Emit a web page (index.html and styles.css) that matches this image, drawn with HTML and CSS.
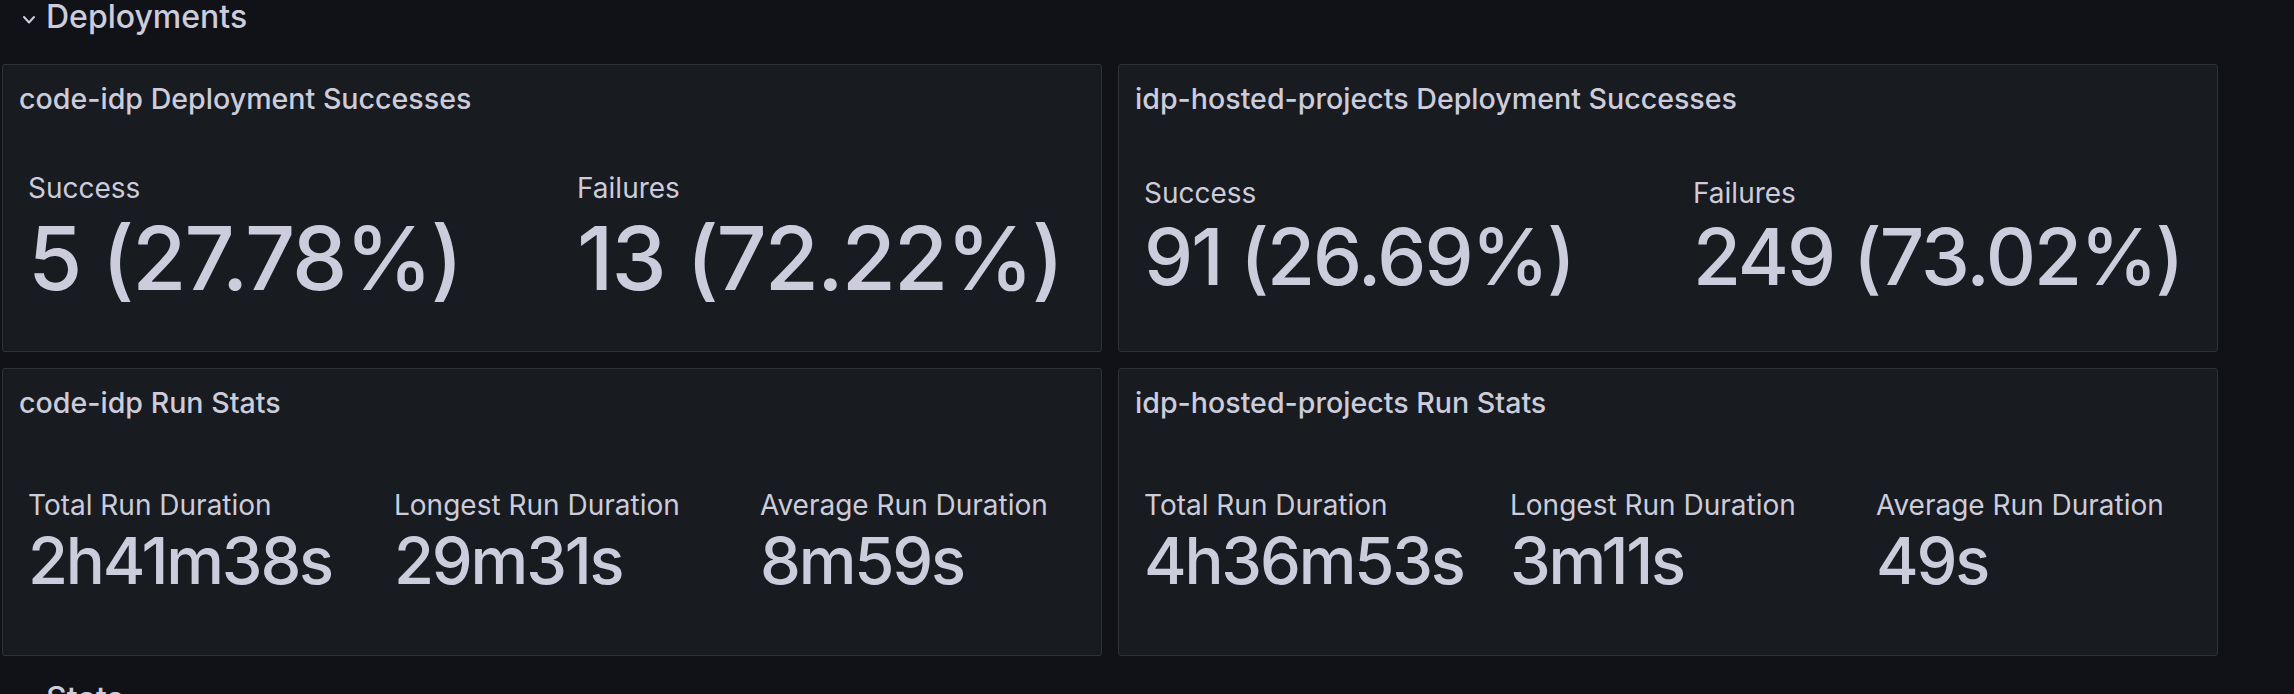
FILE: index.html
```html
<!DOCTYPE html>
<html lang="en">
<head>
<meta charset="utf-8">
<title>Deployments</title>
<link rel="stylesheet" href="styles.css">
</head>
<body>
<main class="dashboard">
  <div class="row-header">
    <svg class="chevron" viewBox="0 0 14 10" aria-hidden="true"><path d="M2 2 L7 7.5 L12 2" fill="none" stroke="#ccccdc" stroke-width="2" stroke-linecap="round" stroke-linejoin="round"/></svg>
    <span class="row-title">Deployments</span>
  </div>
  <div class="panel-grid">
    <section class="panel">
      <header class="panel-header"><h2 class="panel-title">code-idp Deployment Successes</h2></header>
      <div class="stats stats-2 stats-a">
        <div class="stat"><div class="stat-label">Success</div><div class="stat-value">5 (27.78%)</div></div>
        <div class="stat"><div class="stat-label">Failures</div><div class="stat-value">13 (72.22%)</div></div>
      </div>
    </section>
    <section class="panel">
      <header class="panel-header"><h2 class="panel-title">idp-hosted-projects Deployment Successes</h2></header>
      <div class="stats stats-2 stats-b">
        <div class="stat"><div class="stat-label">Success</div><div class="stat-value">91 (26.69%)</div></div>
        <div class="stat"><div class="stat-label">Failures</div><div class="stat-value">249 (73.02%)</div></div>
      </div>
    </section>
    <section class="panel">
      <header class="panel-header"><h2 class="panel-title">code-idp Run Stats</h2></header>
      <div class="stats stats-3 stats-c">
        <div class="stat"><div class="stat-label">Total Run Duration</div><div class="stat-value">2h41m38s</div></div>
        <div class="stat"><div class="stat-label">Longest Run Duration</div><div class="stat-value">29m31s</div></div>
        <div class="stat"><div class="stat-label">Average Run Duration</div><div class="stat-value">8m59s</div></div>
      </div>
    </section>
    <section class="panel">
      <header class="panel-header"><h2 class="panel-title">idp-hosted-projects Run Stats</h2></header>
      <div class="stats stats-3 stats-c">
        <div class="stat"><div class="stat-label">Total Run Duration</div><div class="stat-value">4h36m53s</div></div>
        <div class="stat"><div class="stat-label">Longest Run Duration</div><div class="stat-value">3m11s</div></div>
        <div class="stat"><div class="stat-label">Average Run Duration</div><div class="stat-value">49s</div></div>
      </div>
    </section>
  </div>
  <div class="row-header row-header-next">
    <svg class="chevron" viewBox="0 0 14 10" aria-hidden="true"><path d="M2 2 L7 7.5 L12 2" fill="none" stroke="#ccccdc" stroke-width="2" stroke-linecap="round" stroke-linejoin="round"/></svg>
    <span class="row-title">Stats</span>
  </div>
</main>
</body>
</html>
```

FILE: styles.css
```css
html, body {
  margin: 0;
  padding: 0;
}

body {
  background: #111217;
  color: #ccccdc;
  font-family: Inter, "Noto Sans", sans-serif;
  height: 694px;
  overflow: hidden;
}

.dashboard {
  padding-left: 2px;
}

.row-header {
  display: flex;
  align-items: center;
  height: 34px;
  margin-bottom: 30px;
  padding-left: 20px;
  gap: 10px;
}

.row-header-next {
  margin-top: 26px;
}

.chevron {
  width: 14px;
  height: 10px;
  margin-top: 6px;
  flex-shrink: 0;
}

.row-title {
  font-size: 32px;
  font-weight: 500;
  line-height: 34px;
}

.panel-grid {
  display: grid;
  grid-template-columns: 1100px 1100px;
  grid-auto-rows: 288px;
  gap: 16px;
}

.panel {
  background: #181b1f;
  border: 1px solid #303238;
  border-radius: 3px;
  display: flex;
  flex-direction: column;
  box-sizing: border-box;
}

.panel-header {
  height: 64px;
  box-sizing: border-box;
  padding: 17px 16px 0;
}

.panel-title {
  margin: 0;
  font-size: 28.6px;
  font-weight: 500;
  line-height: 34px;
  white-space: nowrap;
}

.stats {
  flex: 1;
  display: grid;
  align-items: center;
}

.stats-a {
  padding-top: 2px;
}

.stats-2 {
  grid-template-columns: repeat(2, 1fr);
}

.stats-3 {
  grid-template-columns: repeat(3, 1fr);
}

.stat {
  padding-left: 25px;
  white-space: nowrap;
}

.stat-label {
  font-size: 28px;
  line-height: 34px;
}

.stat-value {
  font-weight: 500;
  line-height: 1.21;
}

.stats-a .stat-value {
  font-size: 88px;
  letter-spacing: -2px;
}

.stats-b .stat-value {
  font-size: 78px;
  letter-spacing: -2px;
}

.stats-c .stat-value {
  font-size: 65px;
  letter-spacing: -2.2px;
}
```
